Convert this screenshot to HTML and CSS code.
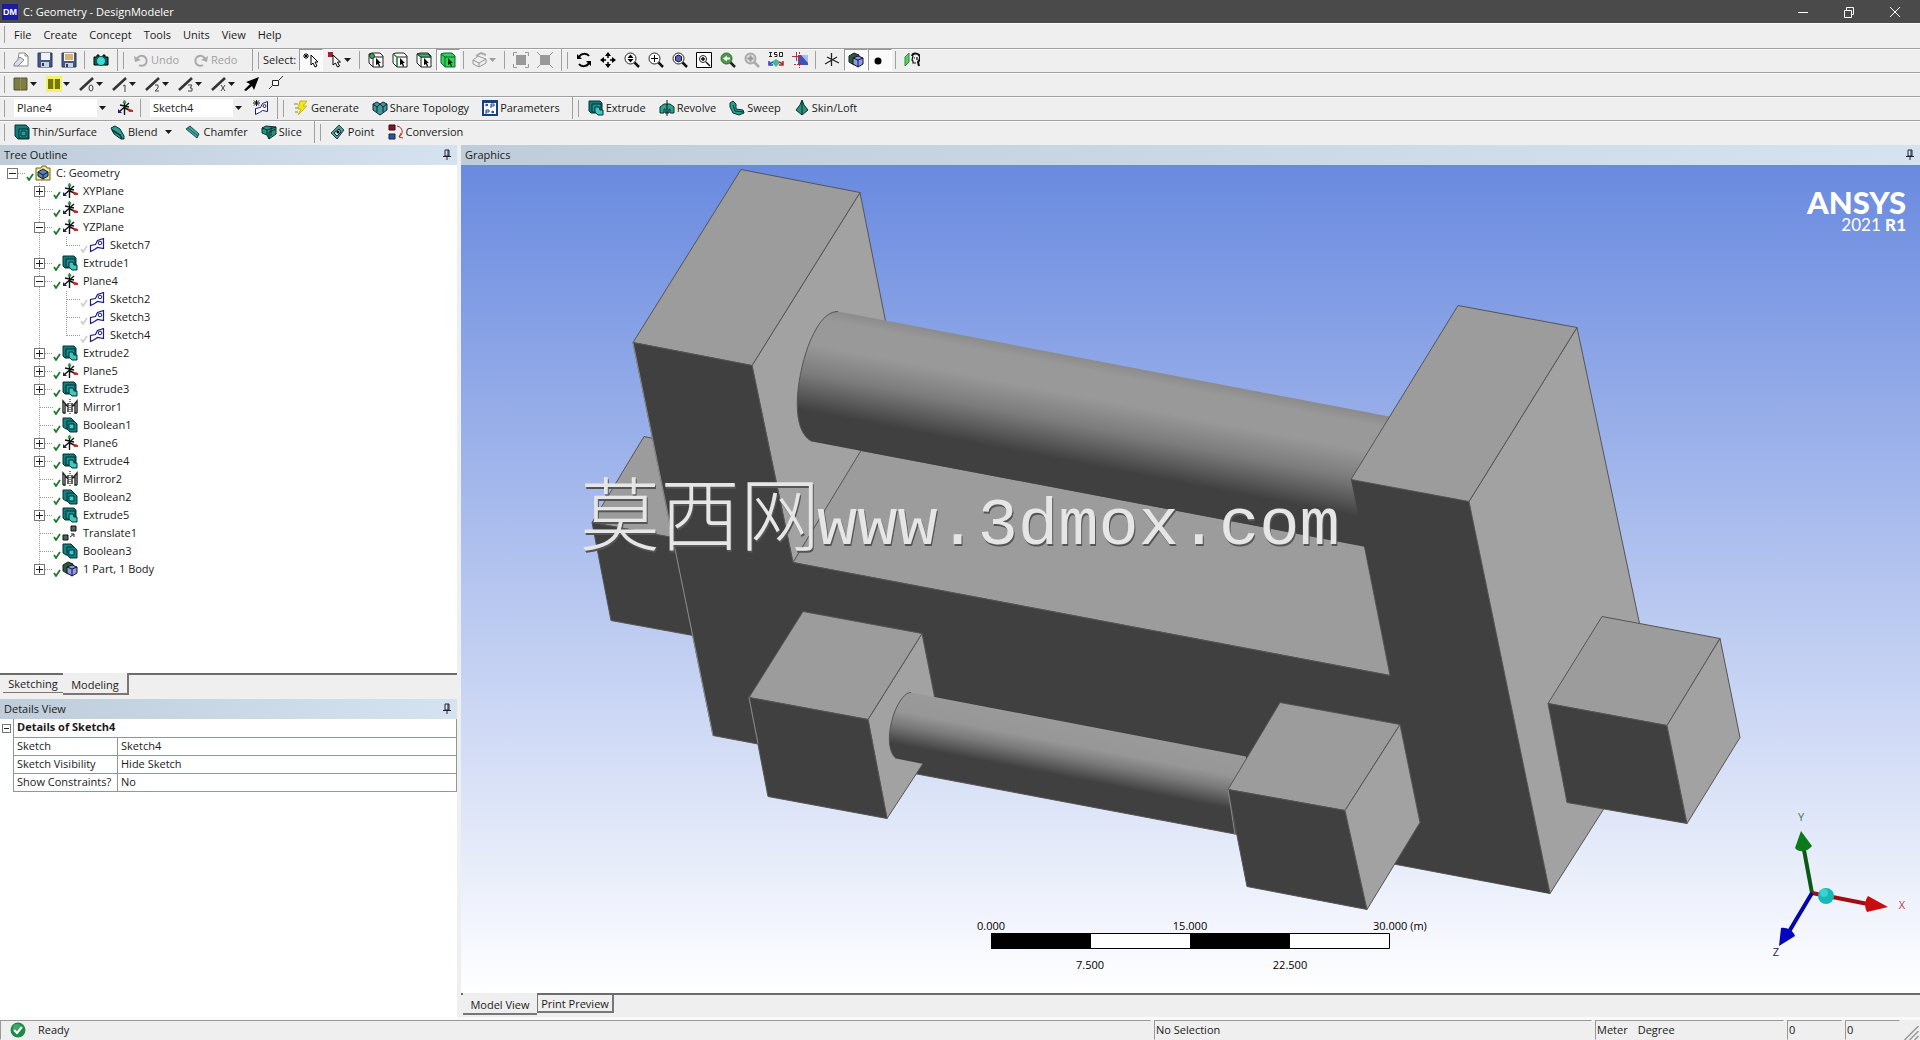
FILE: index.html
```html
<!DOCTYPE html>
<html lang="en">
<head>
<meta charset="utf-8">
<title>C: Geometry - DesignModeler</title>
<link rel="stylesheet" href="styles.css">
</head>
<body>
<svg class="sprite" aria-hidden="true">
  <defs>
    <symbol id="new" viewBox="0 0 16 16"><path d="M6 1h6l3 3v10H5V8z" fill="#fff" stroke="#888"/><path d="M1 12l6-7 4 3-6 6H1z" fill="#d8dde6" stroke="#7d8795"/><path d="M12 1v3h3" fill="none" stroke="#888"/></symbol>
    <symbol id="save" viewBox="0 0 16 16"><path d="M1 1h14v14H1z" fill="#46587f" stroke="#2b3a60"/><path d="M4 1h9v7H4z" fill="#eef3fb"/><path d="M4 10h8v5H4z" fill="#c9d3e6"/><path d="M5 11h2v3H5z" fill="#2b3a60"/></symbol>
    <symbol id="saveas" viewBox="0 0 16 16"><path d="M1 1h14v14H1z" fill="#46587f" stroke="#2b3a60"/><path d="M3 1h10v8H3z" fill="#fff3d8"/><path d="M4 3h8M4 5h8M4 7h8" stroke="#b06a20"/><path d="M4 11h8v4H4z" fill="#c9d3e6"/><path d="M5 12h2v3H5z" fill="#2b3a60"/></symbol>
    <symbol id="camera" viewBox="0 0 16 16"><path d="M1 5h3V3h2v2h4V3h2v2h3v8H1z" fill="#0a5c66" stroke="#000"/><circle cx="8" cy="9" r="4.500" fill="#3fd8dc" stroke="#063"/></symbol>
    <symbol id="undo" viewBox="0 0 16 16"><path d="M4 7a5 5 0 1 1 2 6" fill="none" stroke="#aaa" stroke-width="2"/><path d="M1 4l1 6 6-2z" fill="#aaa"/></symbol>
    <symbol id="redo" viewBox="0 0 16 16"><path d="M12 7a5 5 0 1 0-2 6" fill="none" stroke="#aaa" stroke-width="2"/><path d="M15 4l-1 6-6-2z" fill="#aaa"/></symbol>
    <symbol id="pick" viewBox="0 0 16 16"><path d="M3 1v6M0 4h6M1 2l4 4M5 2L1 6" stroke="#000"/><path d="M8 3v10l2-2 2 4 2-1-2-4h3z" fill="#fff" stroke="#000"/></symbol>
    <symbol id="mode" viewBox="0 0 16 16"><path d="M1 0h5v5H1z" fill="#a02030"/><path d="M6 3v10l2.500-2 2 4 2-1-2-4h3z" fill="#fff" stroke="#000"/></symbol>
    <symbol id="cube" viewBox="0 0 16 16"><path d="M1 2l3-1h8l3 3v11H5L1 11z" fill="#fafafa" stroke="#222"/><path d="M1 2l4 3h10M5 5v10" fill="none" stroke="#222"/><path d="M8 6v7l2-1 1 3 1-1-1-3h2z" fill="#000"/></symbol>
    <symbol id="fpoint" viewBox="0 0 16 16"><use href="#cube"/><circle cx="4" cy="4" r="2.500" fill="#4c9a4c" stroke="#143"/></symbol>
    <symbol id="fedge" viewBox="0 0 16 16"><use href="#cube"/><path d="M1 2l4 3v9" fill="none" stroke="#3c9a4c" stroke-width="1.500"/></symbol>
    <symbol id="fface" viewBox="0 0 16 16"><use href="#cube"/><path d="M1 2h11l3 3H5z" fill="#3fc060" stroke="#143"/></symbol>
    <symbol id="fbody" viewBox="0 0 16 16"><path d="M1 2l3-1h8l3 3v11H5L1 11z" fill="#3fd04a" stroke="#064"/><path d="M1 2l4 3h10M5 5v10" fill="none" stroke="#064"/><path d="M8 6v7l2-1 1 3 1-1-1-3h2z" fill="#032"/></symbol>
    <symbol id="graybox" viewBox="0 0 16 16"><path d="M1 8l5-4 8 3v4l-7 4-6-3z" fill="#eee" stroke="#999"/><path d="M1 8l6 3 7-4M7 11v4" stroke="#999" fill="none"/><path d="M4 4l5-3 5 2" fill="none" stroke="#aaa" stroke-width="2"/></symbol>
    <symbol id="grow" viewBox="0 0 16 16"><path d="M3 3h10v10H3z" fill="#999"/><path d="M.5 4V.5H4M12 .5h3.500V4M15.500 12v3.500H12M4 15.500H.5V12" fill="none" stroke="#999"/></symbol>
    <symbol id="shrink" viewBox="0 0 16 16"><path d="M3 3h10v10H3z" fill="#999"/><path d="M0 0l4 4M16 0l-4 4M16 16l-4-4M0 16l4-4" stroke="#999"/></symbol>
    <symbol id="rotate" viewBox="0 0 16 16"><path d="M3 5c2-4 8-4 10-1M13 11c-2 4-8 4-10 1" fill="none" stroke="#000" stroke-width="2"/><path d="M1 2v5h5zM15 14V9h-5z"/></symbol>
    <symbol id="pan" viewBox="0 0 16 16"><path d="M8 3v3M8 10v3M3 8h3M10 8h3" stroke="#000" stroke-width="1.500"/><path d="M8 0l3 4H5zM8 16l3-4H5zM0 8l4-3v6zM16 8l-4-3v6z"/></symbol>
    <symbol id="lens" viewBox="0 0 16 16"><circle cx="6.500" cy="6.500" r="5.500" fill="#fff" stroke="#222"/><path d="M10.500 10.500L15 15" stroke="#111" stroke-width="2.500"/></symbol>
    <symbol id="zoom" viewBox="0 0 16 16"><use href="#lens"/><path d="M6.500 2.500l3 3.500h-6zM6.500 10.500l3-3.500h-6z"/></symbol>
    <symbol id="zoomin" viewBox="0 0 16 16"><use href="#lens"/><path d="M6.500 3v7M3 6.500h7" stroke="#000"/></symbol>
    <symbol id="zoomfit" viewBox="0 0 16 16"><use href="#lens"/><path d="M6.500 3l3 1.500v4l-3 1.500-3-1.500v-4z" fill="#5a62b8" stroke="#114"/></symbol>
    <symbol id="zoombox" viewBox="0 0 16 16"><path d="M.5.5h15v15H.5z" fill="#fff" stroke="#000"/><circle cx="7" cy="7" r="3.500" fill="#fff" stroke="#222"/><path d="M5 7h4M7 5v4M10 10l4 4" stroke="#111" stroke-width="1.500"/></symbol>
    <symbol id="zoomprev" viewBox="0 0 16 16"><circle cx="6.500" cy="6.500" r="5.500" fill="#4b9a45" stroke="#2c6a2a"/><path d="M3 6.500l4-3v2h3v2H7v2z" fill="#fff"/><path d="M10.500 10.500L15 15" stroke="#222" stroke-width="2.500"/></symbol>
    <symbol id="zoomnext" viewBox="0 0 16 16"><circle cx="6.500" cy="6.500" r="5" fill="#ddd" stroke="#aaa" stroke-width="2"/><path d="M6.500 3.500v6M3.500 6.500h6" stroke="#999" stroke-width="2"/><path d="M10.500 10.500L15 15" stroke="#aaa" stroke-width="2.500"/></symbol>
    <symbol id="iso" viewBox="0 0 16 16"><path d="M1 .5h3M2.500 0v5M1 4.500h3M9 .5H6.500v2H9v2H6.500M11.500.5h3v4h-3z" fill="none" stroke="#222"/><path d="M8 7l3 2v3l-3 3-3-3V9z" fill="#46b8a0"/><path d="M5 10l-4 2M1 9v4h4" stroke="#2a4ab0" fill="none" stroke-width="1.500"/><path d="M11 10l4 2M15 9v4h-4" stroke="#b02a2a" fill="none" stroke-width="1.500"/></symbol>
    <symbol id="lookat" viewBox="0 0 16 16"><path d="M6 3h10v10H6z" fill="#3c54b0"/><path d="M9 3h7v8z" fill="#a8bcf4"/><path d="M0 4.500h9M4.500 0v9" stroke="#b03050"/><path d="M7.500 0v16M2 12.500h8" stroke="#b03050" stroke-dasharray="2 1"/></symbol>
    <symbol id="axes" viewBox="0 0 16 16"><path d="M7.500 8V1M7.500 8v6M1 12l12-7M3 5l12 6" stroke="#222" stroke-width="1.300"/></symbol>
    <symbol id="plane" viewBox="0 0 16 16"><path d="M7.500 9V2M8 8l6 3M3 5l9 2M12 3L2 12M7.500 8v7" stroke="#111" stroke-width="1.400"/><path d="M6 3l1.500-3L9 3z" fill="#2f9a4a" stroke="#2f9a4a"/><path d="M11 8.500l5 1.500v2h-4z" fill="#c0302a"/><path d="M1 9v4h4z" fill="#1c1c80"/></symbol>
    <symbol id="body" viewBox="0 0 16 16"><path d="M1 4l5-3 5 2v6l-5 4-5-3z" fill="#2c5a34" stroke="#122"/><path d="M5 6l5-2 5 2v6l-5 3-5-3z" fill="#8c9ce6" stroke="#113"/><path d="M5 6l5 2 5-2M10 8v7" fill="none" stroke="#113"/></symbol>
    <symbol id="dot" viewBox="0 0 16 16"><circle cx="6" cy="9" r="3.500"/></symbol>
    <symbol id="visible" viewBox="0 0 16 16"><path d="M1 5l4-4v9l-4 4z" fill="#5fd050" stroke="#285"/><path d="M8 4c1-4 8-3 8 2 0 2-1 3-2 4l1 4" fill="none" stroke="#111" stroke-width="2"/><path d="M9 4L8 8l1 1v2h3M10 6h1M13 5v3" fill="none" stroke="#111" stroke-width="1.200"/></symbol>
    <symbol id="olive" viewBox="0 0 16 16"><path d="M1 2h13v12H1z" fill="#7d7d45" stroke="#55552a"/><path d="M7.500 2v12" stroke="#8d8d55"/></symbol>
    <symbol id="yellow" viewBox="0 0 16 16"><path d="M0 0h16v16H0z" fill="#f3f06a"/><path d="M2 3h12v10H2z" fill="#77770c"/><path d="M8 3v10" stroke="#d8d430" stroke-width="2"/></symbol>
    <symbol id="slash" viewBox="0 0 16 16"><path d="M1 14L14 2" stroke="#333" stroke-width="2.500"/></symbol>
    <symbol id="e0" viewBox="0 0 16 16"><use href="#slash"/><ellipse cx="12" cy="12" rx="2" ry="3" fill="none" stroke="#444"/></symbol>
    <symbol id="e1" viewBox="0 0 16 16"><use href="#slash"/><path d="M11 10l2-1v7" fill="none" stroke="#444"/></symbol>
    <symbol id="e2" viewBox="0 0 16 16"><use href="#slash"/><path d="M10 9h3v3l-3 3h4" fill="none" stroke="#444"/></symbol>
    <symbol id="e3" viewBox="0 0 16 16"><use href="#slash"/><path d="M10 9h4l-2 3h2v3h-4" fill="none" stroke="#444"/></symbol>
    <symbol id="ex" viewBox="0 0 16 16"><use href="#slash"/><path d="M10 9l4 6M14 9l-4 6" fill="none" stroke="#444"/></symbol>
    <symbol id="arrow" viewBox="0 0 16 16"><path d="M15 1L2 6l4 2-6 6 2 1 6-5 2 4z"/></symbol>
    <symbol id="vertex" viewBox="0 0 16 16"><path d="M4.500 4.500h6v5h-6z" fill="#fff" stroke="#222"/><path d="M11 4l4-4M4 10l-3 3" stroke="#333"/></symbol>
    <symbol id="sketch" viewBox="0 0 16 16"><path d="M1.500 8.500v6l4-2 3-2 6 1v-10l-6 2-2 4z" fill="#fff" stroke="#1c1c80" stroke-width="1.200"/><circle cx="11" cy="6" r="1.800" fill="none" stroke="#1c1c80"/></symbol>
    <symbol id="newsketch" viewBox="0 0 16 16"><path d="M2.500 8.500v6l4-2 3-2 5 1v-10l-5 2-2 4z" fill="#fff" stroke="#1c1c80"/><circle cx="11.500" cy="6" r="1.500" fill="none" stroke="#1c1c80"/><path d="M3.500 0v6M0 3h7M1 .5l5 5M6 .5l-5 5" stroke="#111"/></symbol>
    <symbol id="bolt" viewBox="0 0 16 16"><path d="M7 1h7l-4 5h4L5 15l3-6H5z" fill="#f5e51c" stroke="#c9b80c"/><path d="M1 4h4M2 8h3M2 12h3" stroke="#8a8a20"/></symbol>
    <symbol id="share" viewBox="0 0 16 16"><path d="M1 4l4-2 3 2 3-2 4 2v6l-7 5-7-5z" fill="#3f9a94" stroke="#124"/><path d="M1 4l4 3 3-3 3 3 4-3M5 7v5M11 7v5" fill="none" stroke="#124"/></symbol>
    <symbol id="params" viewBox="0 0 16 16"><path d="M1 1h14v14H1z" fill="#fff" stroke="#1c3f7a" stroke-width="2"/><path d="M1 2h14" stroke="#1c3f7a" stroke-width="2"/><path d="M3 5h3M4 4l2 1-2 1M9 8V4h3v2H9M4 14v-4h3v2H4M9 12h3M10 11l2 1-2 1" fill="none" stroke="#1c3f9a"/></symbol>
    <symbol id="extrude" viewBox="0 0 16 16"><path d="M1 1h11l2 2v10H3l-2-2z" fill="#147a7a" stroke="#033"/><path d="M4 4h9v8H4z" fill="#1f8f8f" stroke="#033"/><path d="M7 7h4l1 3h3v5h-5l-3-3z" fill="#3fc8c0" stroke="#033"/></symbol>
    <symbol id="thin" viewBox="0 0 16 16"><path d="M1 1h11l3 3v11H4l-3-3z" fill="#147a7a" stroke="#033"/><path d="M5 5h9v9H5zM7 7h5v5H7z" fill="#2c9a96" stroke="#033"/></symbol>
    <symbol id="revolve" viewBox="0 0 16 16"><path d="M1 13V7l4-3h6l4 3v6h-4V9h-1v4H6V9H5v4z" fill="#2fa392" stroke="#033"/><path d="M8 0v16" stroke="#111"/></symbol>
    <symbol id="sweep" viewBox="0 0 16 16"><path d="M1 3l3-2 3 3v5l7 1 1 3-5 2-6-2-3-6z" fill="#2f9f8a" stroke="#033"/><path d="M4 5l2 6 8 1" fill="none" stroke="#033"/></symbol>
    <symbol id="loft" viewBox="0 0 16 16"><path d="M8 0l2 5 4 5-6 5-6-5 4-5z" fill="#2f8f78" stroke="#033"/><path d="M8 1v14" stroke="#033"/></symbol>
    <symbol id="blend" viewBox="0 0 16 16"><path d="M1 4l4-2 5 3 4 7v3h-3l-7-5z" fill="#2f9f8f" stroke="#033"/><path d="M2 6l8 5 2 4" fill="none" stroke="#033" stroke-width="1.500"/></symbol>
    <symbol id="chamfer" viewBox="0 0 16 16"><path d="M1 5l4-3 9 8-2 4z" fill="#3fa99a" stroke="#245"/><path d="M3 4l10 8" stroke="#176060"/></symbol>
    <symbol id="slice" viewBox="0 0 16 16"><path d="M1 4l4-2 10 1v7l-7 5-2-4-5-2z" fill="#2f8f7f" stroke="#033"/><path d="M1 4l5 2 9-3M6 6v5M8 15V8l7-3M10 3v9" fill="none" stroke="#033"/></symbol>
    <symbol id="point" viewBox="0 0 16 16"><path d="M1 9l8-8 5 5-7 9z" fill="#4a9a9a" stroke="#245"/><path d="M4 9l5-4 2 3-4 4z" fill="#d8f0f0" stroke="#123"/><circle cx="8" cy="8" r="1.500"/></symbol>
    <symbol id="convert" viewBox="0 0 16 16"><path d="M1 1h6v5H1z" fill="#7a1c28" stroke="#401"/><path d="M1 10h6v5H1z" fill="#2a5a9a" stroke="#124"/><path d="M9 2c6 1 7 8 2 11M13 9l-2 4 4 1" fill="none" stroke="#b02a2a"/></symbol>
    <symbol id="mirror" viewBox="0 0 16 16"><path d="M1 14V2l5 6V4M15 14V2l-5 6V4M3 5v9H1M13 5v9h2M6 5v8M10 5v8" fill="none" stroke="#222" stroke-width="1.400"/><path d="M8 0v16" stroke="#000" stroke-dasharray="1 1"/></symbol>
    <symbol id="boolean" viewBox="0 0 16 16"><path d="M1 1h8l3 3v8H4L1 10z" fill="#178080" stroke="#033"/><path d="M5 4h7l3 3v8H8l-3-3z" fill="#178080" stroke="#033"/><path d="M7 7h5v5H7z" fill="#35d0d0" stroke="#033"/></symbol>
    <symbol id="translate" viewBox="0 0 16 16"><path d="M9 1h5v5H9zM1 10h5v5H1z" fill="#4a6a58" stroke="#111"/><path d="M8 12l4-3M12 12V9H9" stroke="#222" fill="none"/></symbol>
    <symbol id="project" viewBox="0 0 16 16"><path d="M1 3h5l1-2h4l1 2h3v12H1z" fill="#f4e890" stroke="#6b6420"/><path d="M3 7l5-3 5 3v4l-5 3-5-3z" fill="#5c7cc0" stroke="#123"/><path d="M3 7l5 3 5-3M8 10v4" stroke="#123" fill="none"/></symbol>
    <symbol id="check" viewBox="0 0 8 8"><path d="M1 4l2 3 4-6" fill="none" stroke="currentColor" stroke-width="1.800"/></symbol>
    <symbol id="pin" viewBox="0 0 8 12"><path d="M2 1h4v6H2zM0 7.500h8M4 8v3" fill="none" stroke="#223"/><path d="M5 1v6" stroke="#223"/></symbol>
    <symbol id="caret" viewBox="0 0 7 4"><path d="M0 0h7L3.500 4z" fill="currentColor"/></symbol>
  </defs>
</svg>

<header class="titlebar">
  <span class="app-icon">DM</span>
  <h1 class="title">C: Geometry - DesignModeler</h1>
  <button class="win" aria-label="Minimize"><svg viewBox="0 0 12 12"><path d="M1 6.500h10" stroke="#fff"/></svg></button>
  <button class="win" aria-label="Restore"><svg viewBox="0 0 12 12"><path d="M1.500 4.500h7v7h-7zM3.500 4V1.500h7v7H9" fill="none" stroke="#fff"/></svg></button>
  <button class="win" aria-label="Close"><svg viewBox="0 0 12 12"><path d="M1 1l10 10M11 1L1 11" stroke="#fff"/></svg></button>
</header>

<nav class="bar menu">
  <i class="grip"></i>
  <button>File</button><button>Create</button><button>Concept</button><button>Tools</button><button>Units</button><button>View</button><button>Help</button>
</nav>

<div class="bar">
  <div class="group">
    <i class="grip"></i>
    <button class="tool" aria-label="New"><svg><use href="#new"/></svg></button>
    <button class="tool" aria-label="Save"><svg><use href="#save"/></svg></button>
    <button class="tool" aria-label="Save as"><svg><use href="#saveas"/></svg></button>
    <i class="sep"></i>
    <button class="tool" aria-label="Image capture"><svg><use href="#camera"/></svg></button>
  </div>
  <div class="group">
    <i class="grip"></i>
    <button class="action history" disabled><svg><use href="#undo"/></svg>Undo</button>
    <button class="action history" disabled><svg><use href="#redo"/></svg>Redo</button>
  </div>
  <div class="group">
    <i class="grip"></i>
    <span class="label">Select:</span>
    <button class="tool pressed" aria-label="New selection"><svg><use href="#pick"/></svg></button>
    <button class="drop" aria-label="Select mode"><svg><use href="#mode"/></svg><svg class="caret"><use href="#caret"/></svg></button>
    <i class="sep"></i>
    <button class="tool" aria-label="Points"><svg><use href="#fpoint"/></svg></button>
    <button class="tool" aria-label="Edges"><svg><use href="#fedge"/></svg></button>
    <button class="tool" aria-label="Faces"><svg><use href="#fface"/></svg></button>
    <button class="tool pressed" aria-label="Bodies"><svg><use href="#fbody"/></svg></button>
    <i class="sep"></i>
    <button class="drop" aria-label="Extend selection" disabled><svg><use href="#graybox"/></svg><svg class="caret"><use href="#caret"/></svg></button>
    <i class="sep"></i>
    <button class="tool" aria-label="Expand" disabled><svg><use href="#grow"/></svg></button>
    <button class="tool" aria-label="Shrink" disabled><svg><use href="#shrink"/></svg></button>
  </div>
  <div class="group last">
    <i class="grip"></i>
    <button class="tool" aria-label="Rotate"><svg><use href="#rotate"/></svg></button>
    <button class="tool" aria-label="Pan"><svg><use href="#pan"/></svg></button>
    <button class="tool" aria-label="Zoom"><svg><use href="#zoom"/></svg></button>
    <button class="tool" aria-label="Zoom in"><svg><use href="#zoomin"/></svg></button>
    <button class="tool" aria-label="Zoom to fit"><svg><use href="#zoomfit"/></svg></button>
    <button class="tool" aria-label="Magnifier"><svg><use href="#zoombox"/></svg></button>
    <button class="tool" aria-label="Previous view"><svg><use href="#zoomprev"/></svg></button>
    <button class="tool" aria-label="Next view" disabled><svg><use href="#zoomnext"/></svg></button>
    <button class="tool" aria-label="Isometric view"><svg><use href="#iso"/></svg></button>
    <button class="tool" aria-label="Look at"><svg><use href="#lookat"/></svg></button>
    <i class="sep"></i>
    <button class="tool" aria-label="Display plane"><svg><use href="#axes"/></svg></button>
    <button class="tool pressed" aria-label="Display model"><svg><use href="#body"/></svg></button>
    <button class="tool pressed" aria-label="Display points"><svg><use href="#dot"/></svg></button>
    <i class="sep"></i>
    <button class="tool" aria-label="Look at face"><svg><use href="#visible"/></svg></button>
  </div>
</div>

<div class="bar">
  <div class="group last">
    <i class="grip"></i>
    <button class="drop" aria-label="Face coloring"><svg><use href="#olive"/></svg><svg class="caret"><use href="#caret"/></svg></button>
    <button class="drop" aria-label="Edge coloring"><svg><use href="#yellow"/></svg><svg class="caret"><use href="#caret"/></svg></button>
    <button class="drop" aria-label="Free edges"><svg><use href="#e0"/></svg><svg class="caret"><use href="#caret"/></svg></button>
    <button class="drop" aria-label="Single edges"><svg><use href="#e1"/></svg><svg class="caret"><use href="#caret"/></svg></button>
    <button class="drop" aria-label="Double edges"><svg><use href="#e2"/></svg><svg class="caret"><use href="#caret"/></svg></button>
    <button class="drop" aria-label="Triple edges"><svg><use href="#e3"/></svg><svg class="caret"><use href="#caret"/></svg></button>
    <button class="drop" aria-label="Multiple edges"><svg><use href="#ex"/></svg><svg class="caret"><use href="#caret"/></svg></button>
    <button class="tool" aria-label="Edge direction"><svg><use href="#arrow"/></svg></button>
    <button class="tool" aria-label="Display vertices"><svg><use href="#vertex"/></svg></button>
  </div>
</div>

<div class="bar">
  <div class="group">
    <i class="grip"></i>
    <span class="combo"><select aria-label="Active plane"><option>Plane4</option></select><svg class="caret"><use href="#caret"/></svg></span>
    <button class="tool" aria-label="New plane"><svg><use href="#plane"/></svg></button>
    <i class="sep"></i>
    <span class="combo"><select aria-label="Active sketch"><option>Sketch4</option></select><svg class="caret"><use href="#caret"/></svg></span>
    <button class="tool" aria-label="New sketch"><svg><use href="#newsketch"/></svg></button>
  </div>
  <div class="group">
    <i class="grip"></i>
    <button class="action"><svg><use href="#bolt"/></svg>Generate</button>
    <button class="action"><svg><use href="#share"/></svg>Share Topology</button>
    <button class="action"><svg><use href="#params"/></svg>Parameters</button>
  </div>
  <div class="group last">
    <i class="grip"></i>
    <button class="action"><svg><use href="#extrude"/></svg>Extrude</button>
    <button class="action"><svg><use href="#revolve"/></svg>Revolve</button>
    <button class="action"><svg><use href="#sweep"/></svg>Sweep</button>
    <button class="action"><svg><use href="#loft"/></svg>Skin/Loft</button>
  </div>
</div>

<div class="bar">
  <div class="group">
    <i class="grip"></i>
    <button class="action"><svg><use href="#thin"/></svg>Thin/Surface</button>
    <button class="action"><svg><use href="#blend"/></svg>Blend<svg class="caret"><use href="#caret"/></svg></button>
    <button class="action"><svg><use href="#chamfer"/></svg>Chamfer</button>
    <button class="action"><svg><use href="#slice"/></svg>Slice</button>
  </div>
  <div class="group last">
    <i class="grip"></i>
    <button class="action"><svg><use href="#point"/></svg>Point</button>
    <button class="action"><svg><use href="#convert"/></svg>Conversion</button>
  </div>
</div>

<main class="workspace">
  <aside class="side">
    <h2 class="panel-head">Tree Outline<svg class="pin"><use href="#pin"/></svg></h2>
    <div class="tree">
      <div class="node"><button class="box" aria-label="Collapse"></button><i class="dots"></i><svg class="tick"><use href="#check"/></svg><svg class="ico"><use href="#project"/></svg>C: Geometry</div>
      <ul>
        <li><div class="node"><button class="box plus" aria-label="Expand"></button><i class="dots"></i><svg class="tick"><use href="#check"/></svg><svg class="ico"><use href="#plane"/></svg>XYPlane</div></li>
        <li><div class="node leaf"><i class="dots"></i><svg class="tick"><use href="#check"/></svg><svg class="ico"><use href="#plane"/></svg>ZXPlane</div></li>
        <li><div class="node"><button class="box" aria-label="Collapse"></button><i class="dots"></i><svg class="tick"><use href="#check"/></svg><svg class="ico"><use href="#plane"/></svg>YZPlane</div>
          <ul>
            <li><div class="node leaf hidden"><i class="dots"></i><svg class="tick"><use href="#check"/></svg><svg class="ico"><use href="#sketch"/></svg>Sketch7</div></li>
          </ul></li>
        <li><div class="node"><button class="box plus" aria-label="Expand"></button><i class="dots"></i><svg class="tick"><use href="#check"/></svg><svg class="ico"><use href="#extrude"/></svg>Extrude1</div></li>
        <li><div class="node"><button class="box" aria-label="Collapse"></button><i class="dots"></i><svg class="tick"><use href="#check"/></svg><svg class="ico"><use href="#plane"/></svg>Plane4</div>
          <ul>
            <li><div class="node leaf hidden"><i class="dots"></i><svg class="tick"><use href="#check"/></svg><svg class="ico"><use href="#sketch"/></svg>Sketch2</div></li>
            <li><div class="node leaf hidden"><i class="dots"></i><svg class="tick"><use href="#check"/></svg><svg class="ico"><use href="#sketch"/></svg>Sketch3</div></li>
            <li><div class="node leaf hidden"><i class="dots"></i><svg class="tick"><use href="#check"/></svg><svg class="ico"><use href="#sketch"/></svg>Sketch4</div></li>
          </ul></li>
        <li><div class="node"><button class="box plus" aria-label="Expand"></button><i class="dots"></i><svg class="tick"><use href="#check"/></svg><svg class="ico"><use href="#extrude"/></svg>Extrude2</div></li>
        <li><div class="node"><button class="box plus" aria-label="Expand"></button><i class="dots"></i><svg class="tick"><use href="#check"/></svg><svg class="ico"><use href="#plane"/></svg>Plane5</div></li>
        <li><div class="node"><button class="box plus" aria-label="Expand"></button><i class="dots"></i><svg class="tick"><use href="#check"/></svg><svg class="ico"><use href="#extrude"/></svg>Extrude3</div></li>
        <li><div class="node leaf"><i class="dots"></i><svg class="tick"><use href="#check"/></svg><svg class="ico"><use href="#mirror"/></svg>Mirror1</div></li>
        <li><div class="node leaf"><i class="dots"></i><svg class="tick"><use href="#check"/></svg><svg class="ico"><use href="#boolean"/></svg>Boolean1</div></li>
        <li><div class="node"><button class="box plus" aria-label="Expand"></button><i class="dots"></i><svg class="tick"><use href="#check"/></svg><svg class="ico"><use href="#plane"/></svg>Plane6</div></li>
        <li><div class="node"><button class="box plus" aria-label="Expand"></button><i class="dots"></i><svg class="tick"><use href="#check"/></svg><svg class="ico"><use href="#extrude"/></svg>Extrude4</div></li>
        <li><div class="node leaf"><i class="dots"></i><svg class="tick"><use href="#check"/></svg><svg class="ico"><use href="#mirror"/></svg>Mirror2</div></li>
        <li><div class="node leaf"><i class="dots"></i><svg class="tick"><use href="#check"/></svg><svg class="ico"><use href="#boolean"/></svg>Boolean2</div></li>
        <li><div class="node"><button class="box plus" aria-label="Expand"></button><i class="dots"></i><svg class="tick"><use href="#check"/></svg><svg class="ico"><use href="#extrude"/></svg>Extrude5</div></li>
        <li><div class="node leaf"><i class="dots"></i><svg class="tick"><use href="#check"/></svg><svg class="ico"><use href="#translate"/></svg>Translate1</div></li>
        <li><div class="node leaf"><i class="dots"></i><svg class="tick"><use href="#check"/></svg><svg class="ico"><use href="#boolean"/></svg>Boolean3</div></li>
        <li><div class="node"><button class="box plus" aria-label="Expand"></button><i class="dots"></i><svg class="tick"><use href="#check"/></svg><svg class="ico"><use href="#body"/></svg>1 Part, 1 Body</div></li>
      </ul>
    </div>
    <div class="tabs side-tabs">
      <button class="tab">Sketching</button><button class="tab active">Modeling</button>
    </div>
    <h2 class="panel-head">Details View<svg class="pin"><use href="#pin"/></svg></h2>
    <div class="details">
      <button class="box" aria-label="Collapse"></button>
      <table>
        <thead><tr><th colspan="2">Details of Sketch4</th></tr></thead>
        <tbody>
          <tr><td class="key">Sketch</td><td>Sketch4</td></tr>
          <tr><td class="key">Sketch Visibility</td><td>Hide Sketch</td></tr>
          <tr><td class="key">Show Constraints?</td><td>No</td></tr>
        </tbody>
      </table>
    </div>
  </aside>

  <section class="graphics">
    <h2 class="panel-head">Graphics<svg class="pin"><use href="#pin"/></svg></h2>
    <div class="viewport">
      <svg class="model" viewBox="461 164 1459 829" preserveAspectRatio="xMidYMid slice">
        <defs>
          <linearGradient id="rod" gradientUnits="userSpaceOnUse" x1="838" y1="311" x2="813" y2="441"><stop offset="0" stop-color="#8c8c8c"/><stop offset=".08" stop-color="#999"/><stop offset=".28" stop-color="#999"/><stop offset=".5" stop-color="#7c7c7c"/><stop offset=".78" stop-color="#404040"/></linearGradient>
          <linearGradient id="bar" gradientUnits="userSpaceOnUse" x1="911" y1="692" x2="898" y2="759"><stop offset="0" stop-color="#9a9a9a"/><stop offset=".3" stop-color="#979797"/><stop offset=".5" stop-color="#7a7a7a"/><stop offset=".78" stop-color="#404040"/></linearGradient>
        </defs>
        <g stroke="#555" stroke-width="1" stroke-linejoin="round">
          <path class="top" d="M644 436l24 5 15 98-91-17z"/>
          <path class="front" d="M592 522l91 17 10 96-82-15z"/>
          <path class="right" d="M860 192l52 262-51-2-68 110-41-197z"/>
          <path class="top" d="M741 169l119 23-108 173-119-23z"/>
          <path class="top" d="M861 450l524 99 5 126-597-113z"/>
          <path class="front" d="M633 342l119 23 41 197 597 113-39-197 118 23 81 392-837-158z"/>
          <path d="M838 311L1400 418V553L812 441C790 430 796 380 808 346 818 320 828 311 838 311z" fill="url(#rod)" stroke="none"/>
          <path d="M838 311C828 311 818 320 808 346 796 380 790 430 812 441" fill="none"/>
          <path class="front" d="M1351 479l118 22 81 392-118-23z" stroke="none"/>
          <path class="right" d="M1577 327l83 393-110 173-81-392z"/>
          <path class="top" d="M1458 305l119 22-108 174-118-22z"/>
          <path class="top" d="M1602 616l118 22-53 87-119-22z"/>
          <path class="front" d="M1548 703l119 22 20 98-120-21z"/>
          <path class="right" d="M1720 638l20 99-53 86-20-98z"/>
          <path class="right" d="M922 633l20 101-55 84-19-99z"/>
          <path d="M911 692l335 64v72L896 758C886 750 888 725 897 706 902 696 907 692 911 692z" fill="url(#bar)" stroke="none"/>
          <path d="M911 692C907 692 902 696 897 706 888 725 886 750 896 758" fill="none"/>
          <path class="top" d="M803 611l119 22-54 86-119-22z"/>
          <path class="front" d="M749 697l119 22 19 99-119-22z"/>
          <path class="top" d="M1280 702l120 22-55 86-117-21z"/>
          <path class="front" d="M1228 789l117 21 22 99-120-23z"/>
          <path class="right" d="M1400 724l20 98-53 87-22-99z"/>
          <path d="M633 342l80 393M1228 789l7 45M749 697l9 46" fill="none" stroke="#8a8a8a"/>
        </g>
        <g class="mark">
          <text class="mark-cjk" x="580" y="543">莫西网</text>
          <text class="mark-latin" x="817" y="543">www.3dmox.com</text>
        </g>
      </svg>
      <div class="brand"><strong>ANSYS</strong><span>2021 <b>R1</b></span></div>
      <svg class="scale" viewBox="970 915 470 60">
        <path d="M991.500 933.500h398v15h-398z" fill="#fff" stroke="#000"/><path d="M991 933h100v16h-100zM1190 933h100v16h-100z"/>
        <g text-anchor="middle"><text x="991" y="930">0.000</text><text x="1190" y="930">15.000</text><text x="1090" y="969">7.500</text><text x="1290" y="969">22.500</text></g>
        <text x="1373" y="930">30.000 (m)</text>
      </svg>
      <svg class="triad" viewBox="1750 803 170 190">
        <path d="M1812 893l-8-43" stroke="#0a5a14" stroke-width="4"/><path d="M1801 831l-6 17c4 5 12 4 17-2z" fill="#0a7a1a"/>
        <path d="M1812 893l56 11" stroke="#a00c10" stroke-width="4"/><path d="M1888 907l-20-11c-3 4-4 11-1 16z" fill="#c80c10"/>
        <path d="M1812 893l-25 42" stroke="#0505a8" stroke-width="4"/><path d="M1779 946l2-18c5-1 12 2 14 8z" fill="#0505c0"/>
        <circle cx="1826" cy="896" r="8" fill="#18b8b8"/><circle cx="1824" cy="893" r="4" fill="#3fd0d0"/>
        <g text-anchor="middle"><text x="1801" y="821" fill="#3a7a4a">Y</text><text x="1902" y="909" fill="#c03a4a">X</text><text x="1776" y="956" fill="#222270">Z</text></g>
      </svg>
    </div>
    <div class="tabs view-tabs">
      <button class="tab active">Model View</button><button class="tab boxed">Print Preview</button>
    </div>
  </section>
</main>

<footer class="status">
  <span class="cell ready"><svg viewBox="0 0 16 16"><circle cx="8" cy="8" r="7.500" fill="#1c8a4a"/><circle cx="7" cy="6" r="4" fill="#3fa868"/><path d="M4 8l3 3 5-6" fill="none" stroke="#fff" stroke-width="2"/></svg>Ready</span>
  <span class="cell selection">No Selection</span>
  <span class="cell units"><span>Meter</span><span>Degree</span></span>
  <span class="cell num">0</span>
  <span class="cell num">0</span>
  <svg class="resize" viewBox="0 0 14 14"><path d="M0 14L14 0M5 14l9-9M10 14l4-4" stroke="#999" stroke-width="1.500"/></svg>
</footer>
</body>
</html>
```

FILE: styles.css
```css
* { box-sizing: border-box; }

body {
  margin: 0;
  height: 100vh;
  display: flex;
  flex-direction: column;
  overflow: hidden;
  background: #efefef;
  color: #1a1a1a;
  font: 11px/18px "Open Sans", "Noto Sans", sans-serif;
}

button, select {
  font: inherit;
  color: inherit;
  background: none;
  border: 0;
  padding: 0;
  margin: 0;
  white-space: nowrap;
}

h1, h2, ul { margin: 0; padding: 0; font: inherit; list-style: none; }
.sprite { position: absolute; width: 0; height: 0; }

/* Title bar */
.titlebar {
  flex: none;
  height: 23px;
  display: flex;
  align-items: center;
  background: #4a4a4a;
  color: #fff;
}
.app-icon {
  width: 16px;
  height: 16px;
  margin: 0 5px 0 2px;
  background: #1c1ca0;
  font: bold 9px/16px "Liberation Sans", sans-serif;
  text-align: center;
}
.title { flex: 1; }
.win { width: 46px; height: 20px; display: grid; place-items: center; }
.win:last-child { margin-right: 2px; }
.win svg { width: 12px; height: 12px; }

/* Menu and toolbars */
.bar {
  flex: none;
  height: 24px;
  display: flex;
  border-top: 1px solid #a0a0a0;
  box-shadow: inset 0 1px #fbfbfb;
  padding-bottom: 1px;
}
.menu { border-top: 0; }
.menu button { margin: 0 6px 0 6px; }
.menu .grip { margin-right: -1px; }
.bar:last-of-type { height: 25px; padding-bottom: 2px; }
.group {
  display: flex;
  align-items: center;
  padding-right: 4px;
  border-right: 1px solid #a0a0a0;
  margin-right: 1px;
}
.group.last { border: 0; }
.grip {
  flex: none;
  width: 9px;
  height: 17px;
  align-self: center;
  background: linear-gradient(#a0a0a0, #a0a0a0) 4px 0 / 1px 100% no-repeat;
}
.sep {
  width: 8px;
  height: 18px;
  background: linear-gradient(#a0a0a0, #a0a0a0) 3px 0 / 1px 100% no-repeat;
}
.tool { width: 24px; height: 22px; display: grid; place-items: center; }
.tool svg, .drop svg, .action svg { width: 16px; height: 16px; flex: none; }
.pressed { background: #fafafa; border: 1px solid; border-color: #999 #fff #fff #999; }
.drop { width: 33px; display: flex; align-items: center; gap: 1px; padding-left: 4px; }
.drop .caret, .action .caret, .combo .caret { width: 7px; height: 4px; }
.action { display: flex; align-items: center; gap: 2px; padding: 0 8px 0 5px; }
.action .caret { margin-left: 6px; }
.history { width: 60px; }
button:disabled { color: #a0a0a0; }
.label { width: 36px; }
.combo {
  width: 95px;
  height: 18px;
  margin: 0 4px 0 5px;
  display: grid;
  grid-template-columns: 1fr 10px;
  column-gap: 2px;
  align-items: center;
}
.combo select { appearance: none; background: #fff; height: 18px; padding: 0 3px; }

/* Panels */
.workspace { flex: 1; min-height: 0; display: flex; gap: 4px; }
.side { flex: none; width: 457px; display: flex; flex-direction: column; background: #fff; }
.graphics { flex: 1; min-width: 0; display: flex; flex-direction: column; }
.panel-head {
  flex: none;
  height: 20px;
  display: flex;
  align-items: center;
  justify-content: space-between;
  padding: 0 6px 0 4px;
  background: linear-gradient(90deg, #bfcddb, #d5e2f0);
}
.pin { width: 8px; height: 12px; }

/* Outline tree */
.tree { flex: 1; min-height: 0; overflow: hidden; }
.tree ul {
  padding-left: 27px;
  background: repeating-linear-gradient(#999 0 1px, transparent 1px 2px) 39px 0 / 1px calc(100% - 9px) no-repeat;
}
.node { height: 18px; display: flex; align-items: center; padding: 0 0 2px 7px; white-space: nowrap; }
.leaf { padding-left: 13px; }
.box {
  flex: none;
  width: 11px;
  height: 11px;
  border: 1px solid #777;
  background: linear-gradient(#222, #222) center / 7px 1px no-repeat, #fff;
}
.box.plus {
  background: linear-gradient(#222, #222) center / 7px 1px no-repeat, linear-gradient(#222, #222) center / 1px 7px no-repeat, #fff;
}
.dots { width: 8px; height: 1px; background: repeating-linear-gradient(90deg, #999 0 1px, transparent 1px 2px); }
.leaf .dots { width: 13px; }
.tick { width: 8px; height: 8px; align-self: flex-end; color: #1f7a2c; }
.hidden .tick { color: #d0d0d0; }
.ico { width: 16px; height: 16px; margin: 0 5px 0 1px; }

/* Tab strips */
.tabs { flex: none; display: flex; align-items: flex-start; background: #efefef; border-top: 2px solid #6b6b6b; }
.side-tabs { height: 26px; padding-left: 3px; }
.tab { height: 18px; padding: 0 2px; border-bottom: 1px solid #777; }
.side-tabs .tab { width: 60px; }
.side-tabs .tab.active { width: 66px; }
.tab.active { margin-top: -2px; height: 22px; padding-top: 3px; background: #efefef; border-bottom: 2px solid #777; }
.side-tabs .active { border-right: 2px solid #777; }
.view-tabs { height: 24px; padding-left: 2px; }
.view-tabs .tab { width: 74px; }
.view-tabs .boxed { border: 2px solid #777; border-top: 0; border-left-width: 1px; width: 77px; }

/* Details grid */
.details { height: 298px; display: flex; align-items: flex-start; background: #fff; }
.details .box { width: 9px; height: 9px; margin: 5px 2px 0; background-size: 5px 1px, auto; }
.details table { flex: 1; border-collapse: collapse; table-layout: fixed; }
.details th, .details td { height: 18px; padding: 0 3px 1px; line-height: 16px; text-align: left; border: 1px solid #8a9a94; }
.details th { border-top: 0; }
.details .key { width: 104px; white-space: nowrap; }

/* Viewport */
.viewport { position: relative; flex: 1; min-height: 0; background: linear-gradient(#698adf, #fff); }
.model { display: block; width: 100%; height: 100%; }
.top { fill: #9c9c9c; }
.right { fill: #a2a2a2; }
.front { fill: #404040; }
.mark { fill: #e6e6e6; filter: drop-shadow(1px 2px 0 #555); }
.mark-cjk { font: 300 80px "Noto Sans CJK SC", sans-serif; }
.mark-latin { font: 67px "Liberation Mono", monospace; }
.brand {
  position: absolute;
  top: 22px;
  right: 14px;
  display: flex;
  flex-direction: column;
  align-items: flex-end;
  color: #fff;
  font-family: Lato, sans-serif;
  white-space: nowrap;
}
.brand strong { font-size: 31px; line-height: 30px; font-weight: 900; }
.brand span { font-size: 17px; line-height: 16px; }
.brand b { font-weight: 900; }
.scale { position: absolute; left: 50%; bottom: 18px; width: 470px; height: 60px; margin-left: -221px; }
.triad { position: absolute; right: 0; bottom: 0; width: 170px; height: 190px; }

/* Status bar */
.status { flex: none; height: 23px; display: flex; align-items: flex-end; border-top: 3px solid #fafafa; }
.cell { height: 20px; padding-left: 1px; border: 1px solid; border-color: #999 transparent transparent #999; margin-right: 3px; }
.ready { flex: 1; display: flex; align-items: center; gap: 12px; padding-left: 9px; }
.ready svg { width: 16px; height: 16px; }
.selection { width: 438px; }
.units { width: 189px; display: flex; gap: 10px; }
.num { width: 55px; }
.resize { width: 17px; height: 14px; }
```
